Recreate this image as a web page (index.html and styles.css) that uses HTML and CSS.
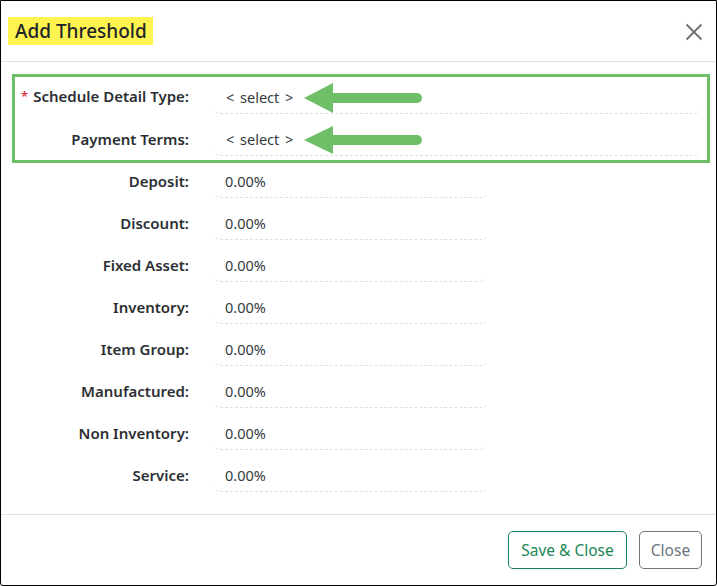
FILE: index.html
```html
<!DOCTYPE html>
<html lang="en">
<head>
<meta charset="utf-8">
<title>Add Threshold</title>
<link rel="stylesheet" href="styles.css">
</head>
<body>
<div class="modal">
  <header class="modal-header">
    <h1 class="modal-title"><span class="highlight">Add Threshold</span></h1>
    <button class="btn-close" aria-label="Close">
      <svg width="18" height="18" viewBox="0 0 18 18"><path d="M1.5 1.5 L16.5 16.5 M16.5 1.5 L1.5 16.5" stroke="#6f6f6f" stroke-width="1.8" fill="none"/></svg>
    </button>
  </header>
  <div class="modal-body">
    <div class="form">
      <div class="row">
        <label class="label"><span class="req">*</span>Schedule Detail Type:</label>
        <div class="field wide select">&lt; select &gt;</div>
      </div>
      <div class="row">
        <label class="label">Payment Terms:</label>
        <div class="field wide select">&lt; select &gt;</div>
      </div>
      <div class="row"><label class="label">Deposit:</label><div class="field">0.00%</div></div>
      <div class="row"><label class="label">Discount:</label><div class="field">0.00%</div></div>
      <div class="row"><label class="label">Fixed Asset:</label><div class="field">0.00%</div></div>
      <div class="row"><label class="label">Inventory:</label><div class="field">0.00%</div></div>
      <div class="row"><label class="label">Item Group:</label><div class="field">0.00%</div></div>
      <div class="row"><label class="label">Manufactured:</label><div class="field">0.00%</div></div>
      <div class="row"><label class="label">Non Inventory:</label><div class="field">0.00%</div></div>
      <div class="row"><label class="label">Service:</label><div class="field">0.00%</div></div>
    </div>
    <div class="annot-box"></div>
    <svg class="arrow arrow-1" width="118" height="30" viewBox="0 0 118 30"><polygon points="0,15 29,0 29,30" fill="#6fbf69"/><line x1="28" y1="15" x2="113" y2="15" stroke="#6fbf69" stroke-width="10" stroke-linecap="round"/></svg>
    <svg class="arrow arrow-2" width="118" height="30" viewBox="0 0 118 30"><polygon points="0,15 29,1 29,29" fill="#6fbf69"/><line x1="28" y1="15" x2="113" y2="15" stroke="#6fbf69" stroke-width="10" stroke-linecap="round"/></svg>
  </div>
  <footer class="modal-footer">
    <button class="btn btn-success">Save &amp; Close</button>
    <button class="btn btn-secondary">Close</button>
  </footer>
</div>
</body>
</html>
```

FILE: styles.css
```css
* { box-sizing: border-box; }
html, body { margin: 0; padding: 0; background: #fff; }
body {
  font-family: "Noto Sans", "Open Sans", "DejaVu Sans", sans-serif;
  color: #212529;
}
.modal {
  width: 717px;
  height: 586px;
  border: 1px solid #000;
  border-radius: 0 0 3px 3px;
  display: flex;
  flex-direction: column;
  background: #fff;
}
.modal-header {
  height: 61px;
  border-bottom: 1px solid #dee2e6;
  display: flex;
  align-items: center;
  justify-content: space-between;
  padding: 0 13px 0 7px;
  flex: none;
}
.modal-title {
  margin: 0;
  font-size: 19px;
  font-weight: 500;
  line-height: 28px;
}
.highlight {
  display: inline-block;
  background: #fff44f;
  padding: 0 6px 0 7px;
  height: 28px;
}
.btn-close {
  border: 0;
  background: transparent;
  padding: 0;
  width: 18px;
  height: 18px;
  display: flex;
  margin-top: 1px;
}
.modal-body {
  position: relative;
  flex: 1;
  padding: 17px 0 0 0;
}
.form {
  display: flex;
  flex-direction: column;
  gap: 8px;
}
.row {
  display: grid;
  grid-template-columns: 188px auto;
  column-gap: 25px;
  align-items: center;
}
.label {
  text-align: right;
  font-size: 15px;
  font-weight: 600;
  color: #2b2f33;
  line-height: 34px;
}
.req {
  color: #dc3545;
  font-size: 13px;
  margin-right: 5px;
  position: relative;
  top: -1px;
}
.field {
  width: 273px;
  height: 34px;
  line-height: 34px;
  padding-left: 11px;
  font-size: 14.5px;
  color: #343a40;
  border-bottom: 1px dashed #dde1e6;
  border-radius: 0 0 6px 6px;
}
.field.select { word-spacing: 2px; padding-left: 12px; }
.field.wide { width: 486px; }
.annot-box {
  position: absolute;
  left: 11px;
  top: 12px;
  width: 698px;
  height: 89px;
  border: 3px solid #6fbf69;
}
.arrow { position: absolute; left: 303px; }
.arrow-1 { top: 21px; }
.arrow-2 { top: 63px; }
.modal-footer {
  flex: none;
  height: 71px;
  border-top: 1px solid #dee2e6;
  display: flex;
  justify-content: flex-end;
  align-items: center;
  gap: 12px;
  padding: 0 14px 0 0;
}
.btn {
  height: 38px;
  padding: 0 10px;
  font-family: inherit;
  font-size: 15.5px;
  background: #fff;
  border-radius: 5px;
  border: 1px solid;
}
.btn-success { color: #198754; border-color: #198754; width: 119px; }
.btn-secondary { color: #6c757d; border-color: #6c757d; width: 63px; }
```
